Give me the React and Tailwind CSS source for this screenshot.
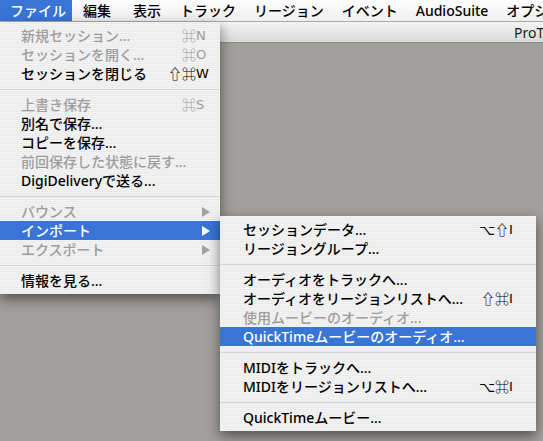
import React from "react";

const FONT = "font-['Noto_Sans','Noto_Sans_CJK_JP',sans-serif]";

const fileItems = [
  { label: "新規セッション...", mod: "⌘", key: "N", disabled: true },
  { label: "セッションを開く...", mod: "⌘", key: "O", disabled: true },
  { label: "セッションを閉じる", mod: "⇧⌘", key: "W" },
  "sep",
  { label: "上書き保存", mod: "⌘", key: "S", disabled: true },
  { label: "別名で保存..." },
  { label: "コピーを保存..." },
  { label: "前回保存した状態に戻す...", disabled: true },
  { label: "DigiDeliveryで送る..." },
  "sep",
  { label: "バウンス", arrow: true, disabled: true },
  { label: "インポート", arrow: true, selected: true },
  { label: "エクスポート", arrow: true, disabled: true },
  "sep",
  { label: "情報を見る..." },
];

const importItems = [
  { label: "セッションデータ...", mod: "⌥⇧", key: "I" },
  { label: "リージョングループ..." },
  "sep",
  { label: "オーディオをトラックへ..." },
  { label: "オーディオをリージョンリストへ...", mod: "⇧⌘", key: "I" },
  { label: "使用ムービーのオーディオ...", disabled: true },
  { label: "QuickTimeムービーのオーディオ...", selected: true },
  "sep",
  { label: "MIDIをトラックへ..." },
  { label: "MIDIをリージョンリストへ...", mod: "⌥⌘", key: "I" },
  "sep",
  { label: "QuickTimeムービー..." },
];

function Arrow({ color }) {
  return (
    <svg width="8" height="10" viewBox="0 0 8 10" className="block">
      <polygon points="0,0 8,5 0,10" fill={color} />
    </svg>
  );
}

function MenuRow({ item, padL, keyW, padR }) {
  const textColor = item.selected
    ? "text-white"
    : item.disabled
    ? "text-[#9d9d9d]"
    : "text-black";
  return (
    <div
      className={`flex h-[19px] items-center leading-[19px] text-[14px] font-[500] whitespace-nowrap ${padL} ${padR} ${textColor} ${
        item.selected ? "bg-[#3875d7]" : ""
      }`}
    >
      <span className="flex-1">{item.label}</span>
      {item.key && (
        <span className="flex">
          <span className="text-right">{item.mod}</span>
          <span className={`${keyW} text-left font-['DejaVu_Sans',sans-serif] text-[13px]`}>
            {item.key}
          </span>
        </span>
      )}
      {item.arrow && (
        <span className="flex w-[8px]">
          <Arrow color={item.selected ? "#ffffff" : "#a2a2a2"} />
        </span>
      )}
    </div>
  );
}

function Separator() {
  return (
    <div className="flex h-[12px] flex-col justify-center">
      <div className="h-px bg-[#d6d6d6]" />
    </div>
  );
}

function Menu({ items, className, padL, keyW, padR }) {
  return (
    <div
      className={`absolute py-[4px] bg-[repeating-linear-gradient(to_bottom,#f3f3f3_0px,#f3f3f3_1px,#ebebeb_1px,#ebebeb_2px)] shadow-[0_5px_12px_rgba(0,0,0,0.5)] ${className}`}
    >
      {items.map((it, i) =>
        it === "sep" ? (
          <Separator key={i} />
        ) : (
          <MenuRow key={i} item={it} padL={padL} keyW={keyW} padR={padR} />
        )
      )}
    </div>
  );
}

export default function App() {
  return (
    <div
      className={`relative flex h-[441px] w-[543px] flex-col overflow-hidden bg-[#a2a09c] ${FONT}`}
    >
      {/* menu bar */}
      <div className="flex h-[22px] items-stretch whitespace-nowrap border-b border-[#a9a9a9] bg-[linear-gradient(to_bottom,#fdfdfd,#efefef)] text-[14px] font-[500] leading-[21px] text-black">
        <span className="bg-[#3875d7] pl-[10px] pr-[6px] text-white">ファイル</span>
        <span className="ml-[11px]">編集</span>
        <span className="ml-[22px]">表示</span>
        <span className="ml-[19px]">トラック</span>
        <span className="ml-[18px]">リージョン</span>
        <span className="ml-[18px]">イベント</span>
        <span className="ml-[18px]">AudioSuite</span>
        <span className="ml-[18px]">オプション</span>
      </div>
      {/* window title bar */}
      <div className="flex h-[21px] items-center whitespace-nowrap border-b border-[#8e8e8e] bg-[linear-gradient(to_bottom,#f4f4f4,#d9d9d9)] pl-[514px] text-[14px] text-[#1a1a1a]">
        ProTools LE
      </div>
      <div className="flex-1" />

      <Menu
        items={fileItems}
        className="left-0 top-[22px] w-[220px]"
        padL="pl-[21px]"
        keyW="w-[14px]"
        padR="pr-[10px]"
      />
      <Menu
        items={importItems}
        className="left-[220px] top-[216px] w-[316px]"
        padL="pl-[23px]"
        keyW="w-[10px]"
        padR="pr-[17px]"
      />
    </div>
  );
}
